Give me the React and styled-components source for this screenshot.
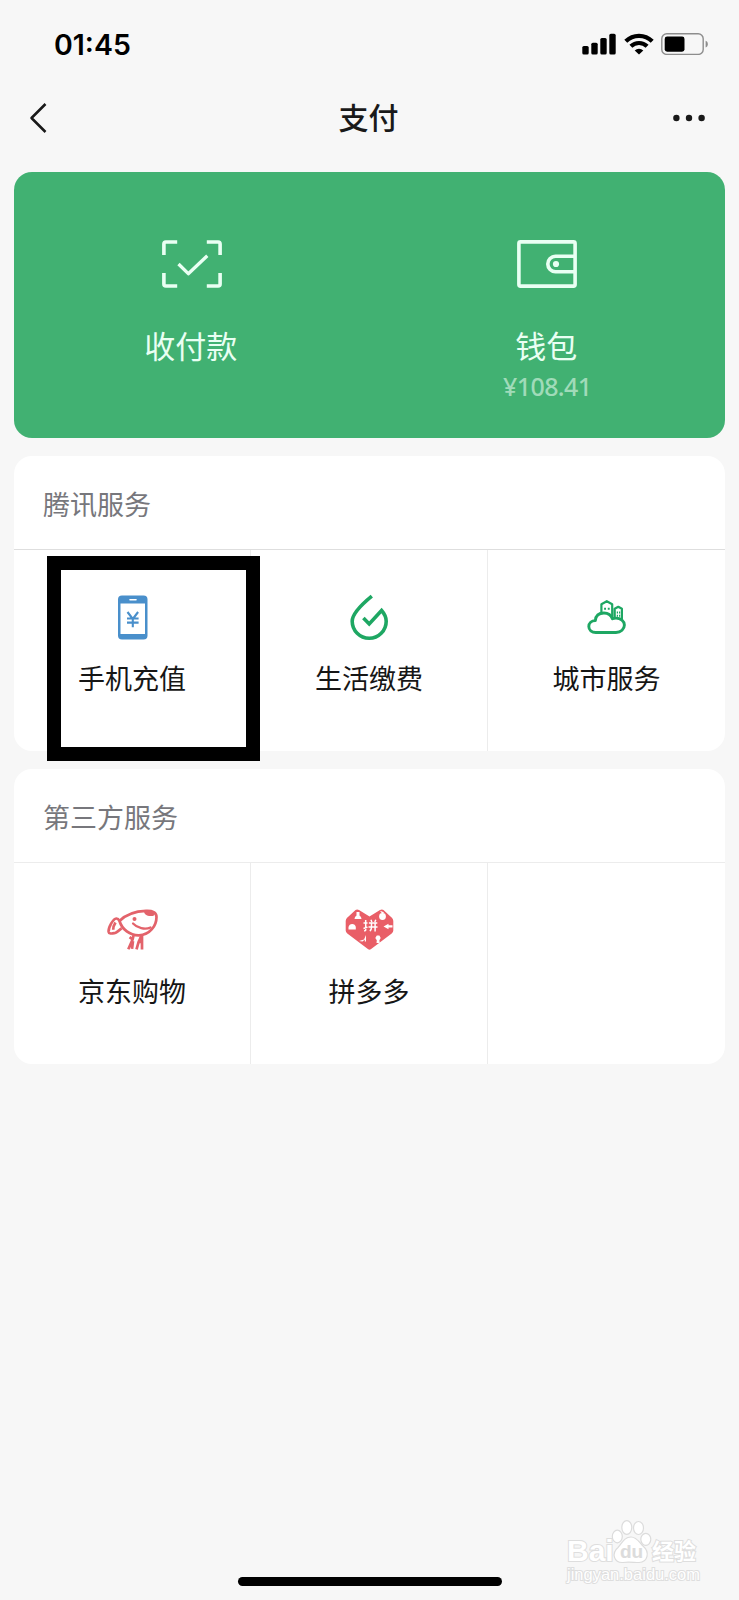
import React from 'react';
import styled, { createGlobalStyle } from 'styled-components';

const GlobalStyle = createGlobalStyle`
    * {
        box-sizing: border-box;
    }
    body {
        margin: 0;
        background-color: #f7f7f7;
        font-family: "Noto Sans CJK SC", "Noto Sans", sans-serif;
    }
    svg {
        display: block;
        flex-shrink: 0;
    }
`;
const Screen = styled.div`
    width: 739px;
    height: 1600px;
    display: flex;
    flex-direction: column;
    background-color: #f7f7f7;
    overflow: hidden;
    position: relative;
`;
const StatusBar = styled.div`
    height: 88px;
    padding: 0 30px 0 54px;
    display: flex;
    align-items: center;
    justify-content: space-between;
`;
const Time = styled.span`
    font-family: Inter, sans-serif;
    font-size: 28.5px;
    font-weight: 600;
    line-height: 34px;
    color: #000000;
    margin-top: 1px;
`;
const StatusIcons = styled.div`
    display: flex;
    align-items: center;
    gap: 7.5px;
`;
const NavBar = styled.div`
    height: 83.5px;
    padding: 0 33px 23.5px 29px;
    display: grid;
    grid-template-columns: 60px 1fr 60px;
    align-items: center;
    h1 {
        margin: -4px 0 0 2px;
        font-size: 30px;
        font-weight: 500;
        line-height: 40px;
        text-align: center;
        color: #191919;
    }
    svg:last-child {
        justify-self: end;
    }
`;
const Content = styled.div`
    flex: 1;
    padding: 0 14px;
    display: flex;
    flex-direction: column;
    gap: 18px;
`;
const PayCard = styled.div`
    height: 266.5px;
    display: grid;
    grid-template-columns: 1fr 1fr;
    background-color: #41b172;
    border-radius: 18px;
`;
const PayItem = styled.div`
    padding-top: 68px;
    display: flex;
    flex-direction: column;
    align-items: center;
`;
const PayLabel = styled.span`
    margin: 35px 2px 0 0;
    font-size: 31px;
    line-height: 44px;
    color: #e9fff3;
`;
const Balance = styled.span`
    margin-top: 4px;
    font-family: "Noto Sans", sans-serif;
    font-size: 25px;
    font-weight: 500;
    letter-spacing: -0.6px;
    line-height: 30px;
    color: #a0dbb9;
`;
const ServiceCard = styled.div`
    height: 295px;
    background-color: #ffffff;
    border-radius: 18px;
`;
const CardTitle = styled.div`
    height: 94px;
    padding: 1px 29px 0;
    display: flex;
    align-items: center;
    font-size: 27px;
    color: #77777c;
    border-bottom: 1px solid ${props => props.$line};
`;
const ServiceGrid = styled.div`
    height: 201px;
    display: grid;
    grid-template-columns: repeat(3, 1fr);
`;
const ServiceCell = styled.div`
    position: relative;
    padding-top: 40px;
    display: flex;
    flex-direction: column;
    align-items: center;
    font-size: 27px;
    line-height: 38px;
    color: #161616;
    border-right: 1px solid #ececec;
    &:last-child {
        border-right: 0;
    }
    svg {
        margin-bottom: 15px;
    }
`;
// thick frame drawn over the highlighted service
const Frame = styled.div`
    position: absolute;
    z-index: 1;
    left: 33px;
    top: 6px;
    width: 213px;
    height: 205px;
    border: 14px solid #000000;
`;
const HomeBar = styled.div`
    width: 264px;
    height: 9px;
    margin: 0 auto 14px;
    border-radius: 5px;
    background-color: #000000;
`;
const Watermark = styled.div`
    position: absolute;
    left: 560px;
    top: 1515px;
    width: 145px;
    height: 72px;
    svg {
        position: absolute;
        left: 50px;
        top: 0;
    }
`;
const MarkText = styled.span`
    position: absolute;
    left: ${props => props.$left}px;
    top: ${props => props.$top}px;
    font-family: ${props => props.$font || '"Liberation Sans", sans-serif'};
    font-size: ${props => props.$size}px;
    font-weight: ${props => props.$weight || 700};
    line-height: ${props => props.$size}px;
    white-space: nowrap;
    color: ${props => props.$color || '#ffffff'};
    -webkit-text-stroke: ${props => props.$stroke || 2}px #dedede;
    paint-order: stroke fill;
`;

const SignalIcon = () => (
    <svg width="34" height="22" viewBox="0 0 34 22">
        <rect x="0.3" y="13" width="6.4" height="8.5" rx="1.6" />
        <rect x="9.3" y="9.7" width="6.4" height="11.8" rx="1.6" />
        <rect x="18.3" y="5" width="6.4" height="16.5" rx="1.6" />
        <rect x="27.3" y="0.8" width="6.4" height="20.7" rx="1.6" />
    </svg>
);
const WifiIcon = () => (
    <svg width="30" height="22" viewBox="0 0 30 22" fill="none" stroke="#000" strokeWidth="4.2">
        <path d="M1.8 8.2a18.8 18.8 0 0 1 26.4 0" />
        <path d="M6.9 13.3a11.6 11.6 0 0 1 16.2 0" />
        <path d="M15 21.6l-4.3-4.1a6.2 6.2 0 0 1 8.6 0z" fill="#000" stroke="none" />
    </svg>
);
const BatteryIcon = () => (
    <svg width="48" height="22" viewBox="0 0 48 22">
        <rect x="0.8" y="0.8" width="41.4" height="20.6" rx="5" fill="none" stroke="#8d8d8d" strokeWidth="1.4" />
        <rect x="3.7" y="3.5" width="19.8" height="15.2" rx="2.4" />
        <path d="M44.6 7.7c3 .8 3 6 0 6.8z" fill="#8d8d8d" />
    </svg>
);
const BackIcon = () => (
    <svg width="18" height="30" viewBox="0 0 18 30" fill="none" stroke="#191919" strokeWidth="2.5">
        <path d="M16.5 1L2.5 15l14 14" strokeLinejoin="round" />
    </svg>
);
const MoreIcon = () => (
    <svg width="34" height="8" viewBox="0 0 34 8" fill="#191919">
        <circle cx="4.4" cy="4" r="3.2" />
        <circle cx="17" cy="4" r="3.2" />
        <circle cx="29.6" cy="4" r="3.2" />
    </svg>
);
const ScanIcon = () => (
    <svg width="60" height="48" viewBox="0 0 60 48" fill="none" stroke="#e9fff3" strokeWidth="3.6">
        <path d="M1.9 15V4q0-2 2-2h11.3M44.8 2h11.3q2 0 2 2v11M1.9 33v11q0 2 2 2h11.3M44.8 46h11.3q2 0 2-2V33" />
        <path d="M16.5 24l9.8 9.7 19-18" strokeLinejoin="round" strokeWidth="3.3" />
    </svg>
);
const WalletIcon = () => (
    <svg width="60" height="48" viewBox="0 0 60 48" fill="none" stroke="#e9fff3" strokeWidth="3.6">
        <rect x="1.9" y="1.9" width="56.2" height="44.2" rx="1.6" />
        <path d="M58 16.3H38.5a7.7 7.7 0 0 0 0 15.4H58" />
        <circle cx="39" cy="24" r="3.1" fill="#e9fff3" stroke="none" />
    </svg>
);
const PhoneIcon = () => (
    <svg width="52" height="54" viewBox="-1 0 52 54">
        <rect x="11" y="5.5" width="29.5" height="44" rx="4" fill="#498fcb" />
        <rect x="13.5" y="13.5" width="24.5" height="30.5" fill="#fff" />
        <path d="M23 9.7h6" stroke="#fff" strokeWidth="1.6" strokeLinecap="round" />
        <path d="M20.5 22l5.3 7 5.3-7M20 28.5h11.6M20 32.6h11.6M25.8 28.5v8.7" fill="none" stroke="#498fcb" strokeWidth="2.1" />
    </svg>
);
const DropIcon = () => (
    <svg width="52" height="54" viewBox="-0.5 0 52 54" fill="none" stroke="#1ea763" strokeWidth="3.6">
        <path d="M28.3 6.2C20 13 8.7 22.8 8.7 31.3a17 17 0 0 0 34 0c0-4-1.7-7.5-4.6-10.8L25.7 34l-5.8-5.9" />
    </svg>
);
const CityIcon = () => (
    <svg width="52" height="54" viewBox="0.5 0 52 54" fill="none" stroke="#1ea763" strokeWidth="2.9" strokeLinejoin="round">
        <path d="M20.9 24V14.2l5.4-3 5.4 3V29M34.2 28v-9.2l3.6-2 3.6 2V31" strokeWidth="2.2" />
        <path d="M15.3 42.5c-4 0-7-2.4-7-5.9 0-3.4 2.8-5.9 6.5-6 .5-5 4-7.6 8.6-7.6 4.300 0 7.200 2 8.500 5.800 1.100-.5 2.200-.7 3.600-.7 4.700 0 8.400 3 8.400 7s-3.500 7.400-8.400 7.400z" fill="#fff" />
        <path d="M23.600 18.800h1.900m1.800 0h1.900M36.300 22.600h1.200m1 0h1.200M36.300 25.800h1.200m1 0h1.200" strokeWidth="2" />
    </svg>
);
const JdIcon = () => (
    <svg width="52" height="54" viewBox="-1 6.5 52 54" fill="none" stroke="#e3636b" strokeWidth="2.7" strokeLinejoin="round">
        <path d="M12.5 24.5C19 18 28.5 14.7 39 14.4c6.700-.3 10.500 1.500 10.500 6C49.500 29 43 38.500 32 38.800 23 39 15 33 12.500 24.500z" />
        <path d="M12.500 24.500c-.5-1-1.500-2.600-3.200-2.500-3.300.2-8 9.300-7.700 13.200.3 2.200 3 2 5.600 1.500 3-.7 5.200-3 7.300-5M8.500 26c-1.600 2.500-2.400 4.700-2.300 7.200" />
        <path d="M37 14.500c3.700-1.500 8.500-1 10.700 1.200.8 3-1 3.800-4.300 3.800-3.700 0-6.400-1.500-6.400-5z" fill="#e3636b" stroke="none" />
        <circle cx="27.500" cy="22.400" r="2" fill="#e3636b" stroke="none" />
        <path d="M26 27c4.200 4.600 12 6.500 17.500 4" strokeWidth="2.2" strokeLinecap="round" />
        <path d="M26.600 38.700l-1 4.200-3-2.300M25.600 43l-4.300 9.700M26 44.500l-1 7.800M34.500 39l-3 6.800-2 7M30.500 45.500h5M35 39v14" strokeWidth="2.700" />
    </svg>
);
const PddIcon = () => (
    <svg width="52" height="54" viewBox="-0.5 6.5 52 54">
        <path d="M12 13.600q1.500-1.200 3.500 0L26 20l10.500-6.400q2-1.200 3.500 0l8.600 8q1.200 1.300 1.200 3v9.500q0 1.800-1.600 2.800L27.300 52.800q-1.300.8-2.600 0L3.800 36.900q-1.600-1-1.600-2.800v-9.500q0-1.700 1.200-3z" fill="#e95e67" />
        <path d="M20 26.500h4M20 32l4-1.400M22.200 23.500v10q0 1-1.600.8M27.400 23.300l1 2.200m3.900-2.200l-1 2.200M25.400 26.500h8.400M25 30.400h9M28 26.500v4q0 3-1.700 4M31.600 26.500v8.400" fill="none" stroke="#fff" strokeWidth="1.500" />
        <g fill="#fff">
            <path d="M13 15.500h3v3.500q2 1 2 3.500h-7q0-2.500 2-3.500z" />
            <path d="M5 33v-2.600q.8-3 3.700-3 2.900 0 3.600 3V33z" />
            <circle cx="39" cy="20" r="3.400" />
            <path d="M36.500 14.300l4 1.500-1.500 2zM40 30l5-2.800v1.600h4v2.200h-4v1.800z" />
            <path d="M15.500 44.500l5-1.500 2-4.500v6.500h-1.200v-2l-2.300 2z" />
            <path d="M33.300 39h2.600l1.300 2.500-1.300 2.200.3 2.800h-3.200l.3-2.800-1.500-2.200z" />
        </g>
    </svg>
);
const PawIcon = () => (
    <svg width="44" height="50" viewBox="0 0 44 50" fill="#ffffff" stroke="#dcdcdc" strokeWidth="1.2">
        <ellipse cx="7.3" cy="21.5" rx="5" ry="6.3" />
        <ellipse cx="16.8" cy="12.5" rx="5" ry="6.8" />
        <ellipse cx="28.5" cy="13" rx="5" ry="6.5" />
        <ellipse cx="35.8" cy="24.300" rx="5" ry="6" />
        <path d="M21 22c6 0 8 5 12 9 7 6 5 16-4 16.500-5 0-11-1-16 0-9 .5-12-9-5-15 4-4 6-10.500 13-10.500z" />
    </svg>
);

const tencentServices = [
    { name: '手机充值', icon: PhoneIcon, framed: true },
    { name: '生活缴费', icon: DropIcon },
    { name: '城市服务', icon: CityIcon },
];
const otherServices = [
    { name: '京东购物', icon: JdIcon },
    { name: '拼多多', icon: PddIcon },
    { name: '' },
];

const Services = ({ title, items, line }) => (
    <ServiceCard>
        <CardTitle $line={line}>{title}</CardTitle>
        <ServiceGrid>
            {items.map(({ name, icon: Icon, framed }, i) => (
                <ServiceCell key={i}>
                    {Icon && <Icon />}
                    {name}
                    {framed && <Frame />}
                </ServiceCell>
            ))}
        </ServiceGrid>
    </ServiceCard>
);

const App = () => {
    return (
        <Screen>
            <GlobalStyle />
            <StatusBar>
                <Time>01:45</Time>
                <StatusIcons>
                    <SignalIcon />
                    <WifiIcon />
                    <BatteryIcon />
                </StatusIcons>
            </StatusBar>
            <NavBar>
                <BackIcon />
                <h1>支付</h1>
                <MoreIcon />
            </NavBar>
            <Content>
                <PayCard>
                    <PayItem>
                        <ScanIcon />
                        <PayLabel>收付款</PayLabel>
                    </PayItem>
                    <PayItem>
                        <WalletIcon />
                        <PayLabel>钱包</PayLabel>
                        <Balance>¥108.41</Balance>
                    </PayItem>
                </PayCard>
                <Services title="腾讯服务" items={tencentServices} line="#dedede" />
                <Services title="第三方服务" items={otherServices} line="#ececec" />
            </Content>
            <Watermark>
                <MarkText $left={7} $top={21} $size={30}>Bai</MarkText>
                <PawIcon />
                <MarkText $left={60} $top={27} $size={19} $color="#dcdcdc" $stroke={0.1}>du</MarkText>
                <MarkText $left={92} $top={23} $size={22} $stroke={2} $font={'"Noto Sans CJK SC", sans-serif'}>经验</MarkText>
                <MarkText $left={7} $top={51} $size={16.5} $weight={400}>jingyan.baidu.com</MarkText>
            </Watermark>
            <HomeBar />
        </Screen>
    );
}

export default App;
